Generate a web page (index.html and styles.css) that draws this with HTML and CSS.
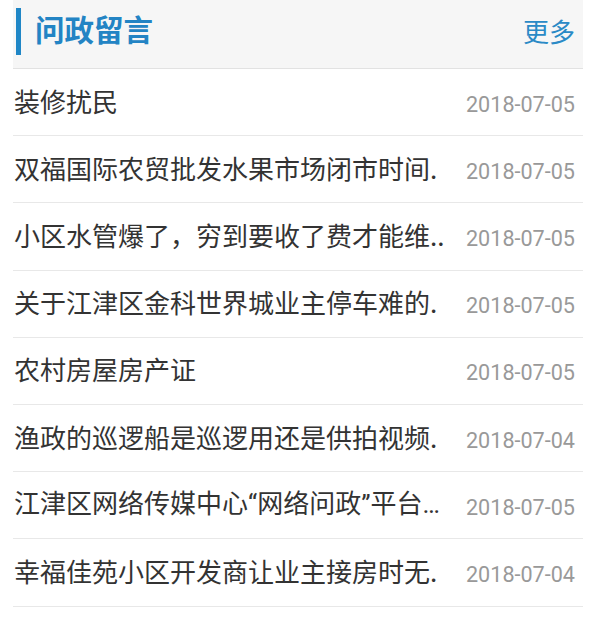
FILE: index.html
```html
<!DOCTYPE html>
<html lang="zh">
<head>
<meta charset="utf-8">
<link rel="stylesheet" href="styles.css">
</head>
<body>
<div class="panel">
  <div class="head">
    <div class="head-left"><span class="bar"></span><span class="title">问政留言</span></div>
    <span class="more">更多</span>
  </div>
  <div class="row"><span class="t">装修扰民</span><span class="d">2018-07-05</span></div>
  <div class="row"><span class="t">双福国际农贸批发水果市场闭市时间.</span><span class="d">2018-07-05</span></div>
  <div class="row"><span class="t">小区水管爆了，穷到要收了费才能维..</span><span class="d">2018-07-05</span></div>
  <div class="row"><span class="t">关于江津区金科世界城业主停车难的.</span><span class="d">2018-07-05</span></div>
  <div class="row"><span class="t">农村房屋房产证</span><span class="d">2018-07-05</span></div>
  <div class="row"><span class="t">渔政的巡逻船是巡逻用还是供拍视频.</span><span class="d">2018-07-04</span></div>
  <div class="row"><span class="t">江津区网络传媒中心<span class="lat">“</span>网络问政<span class="lat">”</span>平台<span class="lat">…</span></span><span class="d">2018-07-05</span></div>
  <div class="row"><span class="t">幸福佳苑小区开发商让业主接房时无.</span><span class="d">2018-07-04</span></div>
</div>
</body>
</html>
```
FILE: styles.css
```css
html, body {
  margin: 0;
  padding: 0;
  background: #ffffff;
}
body {
  font-family: "Noto Sans CJK SC", "Noto Sans", sans-serif;
}
.panel {
  width: 570px;
  margin-left: 13px;
}
.head {
  height: 69px;
  box-sizing: border-box;
  background: #f6f6f6;
  border-bottom: 1px solid #e2e2e2;
  display: flex;
  align-items: center;
  justify-content: space-between;
  padding: 0 8px 6px 3px;
}
.head-left {
  display: flex;
  align-items: center;
}
.bar {
  width: 5px;
  height: 47px;
  background: #1f86c6;
  margin-right: 14px;
}
.title {
  font-size: 29.5px;
  font-weight: 700;
  color: #2384c4;
  line-height: 1.3;
  position: relative;
  top: -3px;
}
.more {
  font-size: 26px;
  color: #2a8ac6;
  line-height: 1.3;
}
.row {
  height: 67.2px;
  box-sizing: border-box;
  border-bottom: 1px solid #e8e8e8;
  display: flex;
  align-items: center;
  justify-content: space-between;
  padding: 0 8px 0 1px;
}
.t {
  font-size: 26px;
  color: #333333;
  line-height: 1.3;
  white-space: nowrap;
  padding-bottom: 3px;
}
.lat {
  font-family: Roboto, "Liberation Sans", sans-serif;
}
.d {
  font-family: Roboto, "Liberation Sans", sans-serif;
  font-size: 21.6px;
  color: #999999;
  line-height: 1.3;
  flex-shrink: 0;
  padding-top: 5px;
  margin-left: 8px;
}
```
